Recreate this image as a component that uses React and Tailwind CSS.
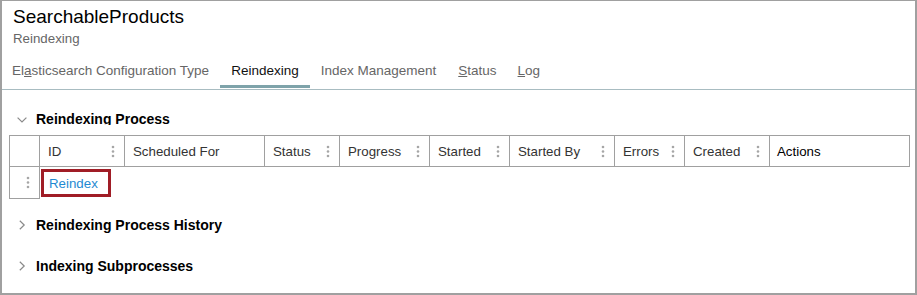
import React from "react";

const Kebab = ({ className = "" }) => (
  <svg width="4" height="13" viewBox="0 0 4 13" className={className}>
    <circle cx="2" cy="2" r="1.3" fill="#a6a6a6" />
    <circle cx="2" cy="6.5" r="1.3" fill="#a6a6a6" />
    <circle cx="2" cy="11" r="1.3" fill="#a6a6a6" />
  </svg>
);

const ChevronDown = () => (
  <svg width="10" height="6" viewBox="0 0 10 6" className="ml-[15px] mt-[7px]">
    <polyline points="0.6,0.6 5,5 9.4,0.6" fill="none" stroke="#8a8a8a" strokeWidth="1.2" />
  </svg>
);

const ChevronRight = () => (
  <svg width="7" height="10" viewBox="0 0 7 10" className="ml-[17px] mt-[4px]">
    <polyline points="0.8,0.8 5.2,5 0.8,9.2" fill="none" stroke="#8a8a8a" strokeWidth="1.2" />
  </svg>
);

const columns = [
  { label: "ID", w: "w-[85px]", kebab: true },
  { label: "Scheduled For", w: "w-[140px]", kebab: false },
  { label: "Status", w: "w-[75px]", kebab: true },
  { label: "Progress", w: "w-[90px]", kebab: true },
  { label: "Started", w: "w-[80px]", kebab: true },
  { label: "Started By", w: "w-[105px]", kebab: true },
  { label: "Errors", w: "w-[70px]", kebab: true },
  { label: "Created", w: "w-[85px]", kebab: true },
];

export default function App() {
  return (
    <div className="w-[917px] h-[295px] bg-white border-t border-l-2 border-r-2 border-b-2 border-[#a0a0a0] font-['Liberation_Sans',Arial,sans-serif] overflow-hidden">
      {/* Header */}
      <div className="pl-[11px] pt-[4px]">
        <div className="text-[19px] leading-[24px] text-black">SearchableProducts</div>
        <div className="mt-[2px] text-[13.3px] leading-[16px] text-[#666666]">Reindexing</div>
      </div>

      {/* Tabs */}
      <div className="mt-[16px] flex border-b border-[#a8bcc1] pb-[1px] text-[13.5px] leading-[16px]">
        <div className="pl-[10px] pr-[11px] pb-[6px] border-b-[3px] border-transparent text-[#666666]">
          El<span className="underline">a</span>sticsearch Configuration Type
        </div>
        <div className="px-[11px] pb-[6px] border-b-[3px] border-[#7ea3aa] text-[#111111]">Reindexing</div>
        <div className="px-[11px] pb-[6px] border-b-[3px] border-transparent text-[#666666]">Index Management</div>
        <div className="px-[11px] pb-[6px] border-b-[3px] border-transparent text-[#666666]">
          <span className="underline">S</span>tatus
        </div>
        <div className="px-[10px] pb-[6px] border-b-[3px] border-transparent text-[#666666]">
          <span className="underline">L</span>og
        </div>
      </div>

      {/* Content */}
      <div>
        <div className="mt-[20px] flex h-[15px] overflow-hidden">
          <div className="w-[34px] flex items-start">
            <ChevronDown />
          </div>
          <span className="font-bold text-[14px] leading-[18px] text-black">Reindexing Process</span>
        </div>

        {/* Table */}
        <div className="ml-[7px] mt-[10px] w-[901px] text-[13.3px] leading-[16px]">
          <div className="flex h-[32px] border-y border-[#a0a0a0]">
            <div className="w-[30px] border-l border-[#a0a0a0]" />
            {columns.map((c) => (
              <div
                key={c.label}
                className={`${c.w} border-l border-[#a0a0a0] flex items-center justify-between pl-[8px] pr-[9px] pt-[2px] text-[#333333]`}
              >
                <span className="whitespace-nowrap">{c.label}</span>
                {c.kebab && <Kebab className="-mt-[2px]" />}
              </div>
            ))}
            <div className="w-[141px] border-x border-[#a0a0a0] flex items-center pl-[7px] pt-[2px] text-black">
              Actions
            </div>
          </div>
          <div className="flex h-[32px]">
            <div className="w-[31px] h-[32px] border-x border-b border-[#a0a0a0] flex items-center pl-[16px]">
              <Kebab className="mt-[-1px]" />
            </div>
            <div className="pl-[1px] pt-[2px]">
              <div className="w-[70px] h-[28px] border-[3px] border-[#a01d26] flex items-center pl-[5px] pt-[1px]">
                <span className="text-[#1f8ad2]">Reindex</span>
              </div>
            </div>
          </div>
        </div>

        <div className="mt-[17px] flex h-[18px]">
          <div className="w-[34px] flex items-start">
            <ChevronRight />
          </div>
          <span className="font-bold text-[14px] leading-[18px] text-black">Reindexing Process History</span>
        </div>

        <div className="mt-[23px] flex h-[18px]">
          <div className="w-[34px] flex items-start">
            <ChevronRight />
          </div>
          <span className="font-bold text-[14px] leading-[18px] text-black">Indexing Subprocesses</span>
        </div>
      </div>
    </div>
  );
}
